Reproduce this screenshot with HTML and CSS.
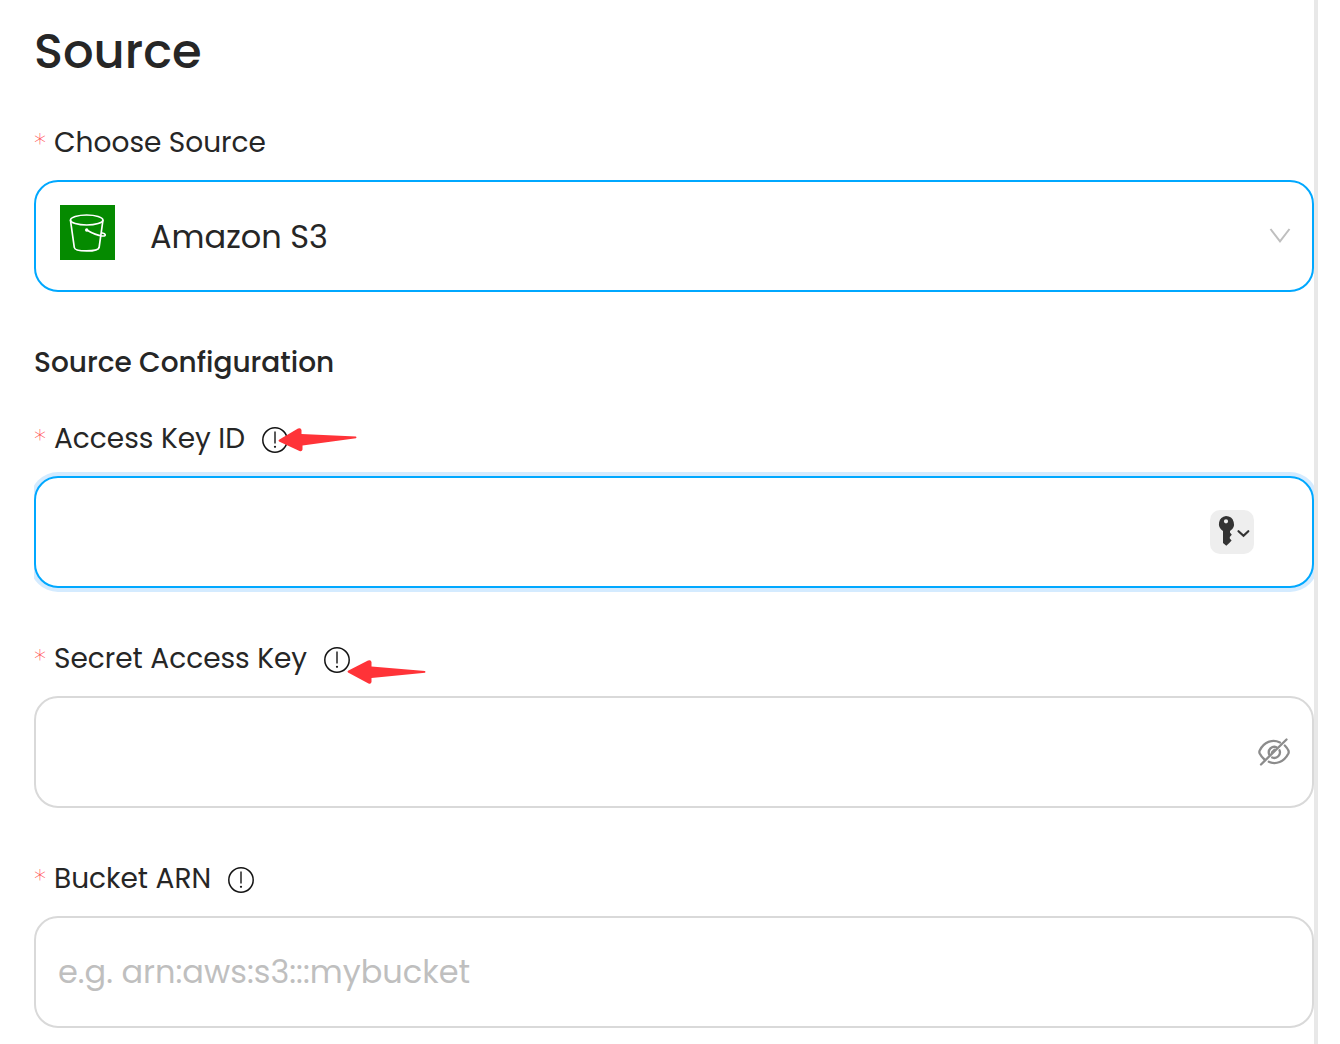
FILE: index.html
```html
<!DOCTYPE html>
<html lang="en">
<head>
<meta charset="utf-8">
<meta name="viewport" content="width=device-width, initial-scale=1">
<title>Source</title>
<link rel="stylesheet" href="styles.css">
</head>
<body>
<svg class="sprite" aria-hidden="true">
  <symbol id="info" viewBox="0 0 28 28">
    <circle cx="14" cy="14" r="12.2" fill="none" stroke="currentColor" stroke-width="1.5"/>
    <path d="M14 5.500v12" stroke="currentColor" stroke-width="1.4"/>
    <circle cx="14" cy="20.800" r="1.100" fill="currentColor"/>
  </symbol>
  <symbol id="arrow" viewBox="0 0 80 28">
    <path d="M1 14.500Q0 13.500 1 12.800L21 2.500Q24 1.300 24.500 4V8.500L78 13Q79 14 78 14.800L24.500 20V24Q24 26.500 21.500 25.500Z" fill="#ff3338"/>
  </symbol>
  <symbol id="arrow-tilted" viewBox="0 0 80 28">
    <path d="M1 15.500Q0 14.500 1 13.800L20 2.500Q23 1.300 23.500 4V8L78 10.500Q79 11.500 78 12.300L24.500 19.500V23.500Q24 26 21.500 25Z" fill="#ff3338"/>
  </symbol>
</svg>
<main class="panel">
  <h1 class="title">Source</h1>
  <form class="form">
    <div class="field">
      <div class="label-row"><span class="required">*</span><label for="source">Choose Source</label></div>
      <div class="control">
        <svg class="source-logo" viewBox="0 0 55 55" aria-hidden="true">
          <path fill="#058a00" d="M0 0h55v55H0z"/>
          <g fill="none" stroke="#fff" stroke-width="1.700" stroke-linecap="round">
            <ellipse cx="26.700" cy="15" rx="16.200" ry="5"/>
            <path d="M10.500 15.500L14.300 42.500c.5 4.600 24 4.600 24.800 0l3.800-27M26.700 25c5 3 12 5.600 16 6 4 .300 3-2.500-.5-3"/>
          </g>
          <circle cx="26.700" cy="25" r="1.700" fill="#fff"/>
        </svg>
        <select class="box box-select box-active" id="source"><option>Amazon S3</option></select>
        <svg class="chevron" viewBox="0 0 22 16" aria-hidden="true"><path d="M1.500 1L11 13.300 20.500 1" fill="none" stroke="#bfbfbf" stroke-width="2"/></svg>
      </div>
    </div>
    <h2 class="section-title">Source Configuration</h2>
    <div class="field">
      <div class="label-row"><span class="required">*</span><label for="key-id">Access Key ID</label>
        <span class="hint"><svg class="info"><use href="#info"/></svg><svg class="arrow arrow-near"><use href="#arrow-tilted"/></svg></span>
      </div>
      <div class="control">
        <input class="box box-active box-focus" id="key-id" type="text">
        <button class="key-button" type="button" aria-label="Saved keys">
          <svg viewBox="0 0 44 44" aria-hidden="true">
            <path fill="#333" fill-rule="evenodd" d="M16 6a8 8 0 0 1 4 14.900v1.600l1.800 2.300-2 2.200v1.500l1.800 2-2.300 2.500-3 2.800-3.300-2.900v-12A8 8 0 0 1 16 6zm0 3.200a2 2 0 1 0 0 4.200 2 2 0 1 0 0-4.200z"/>
            <path d="M28.500 21.200l5 4.600 4.800-4.600" fill="none" stroke="#333" stroke-width="2.200" stroke-linecap="round"/>
          </svg>
        </button>
      </div>
    </div>
    <div class="field">
      <div class="label-row"><span class="required">*</span><label for="secret">Secret Access Key</label>
        <span class="hint"><svg class="info"><use href="#info"/></svg><svg class="arrow arrow-low"><use href="#arrow"/></svg></span>
      </div>
      <div class="control">
        <input class="box" id="secret" type="password">
        <button class="eye-button" type="button" aria-label="Show secret">
          <svg viewBox="0 0 32 28" aria-hidden="true">
            <g fill="none" stroke="#8c8c8c" stroke-width="2.300" stroke-linecap="round">
              <path d="M22 4.500C14 .8 6 4 1.700 12.500Q1 14 1.700 15.500 3.500 19 6.500 21.500M26.800 7.500q2.400 2.400 3.600 5 .6 1.500 0 3C26 24 18 27 10.800 23.800"/>
              <path d="M18.500 9.200a5.600 5.600 0 0 0-7.300 7.300M21.500 12.200a5.600 5.600 0 0 1-7.300 7.300M16.500 11.800L14 14.300"/>
              <path d="M3 26.500L28.500 1.500"/>
            </g>
          </svg>
        </button>
      </div>
    </div>
    <div class="field">
      <div class="label-row"><span class="required">*</span><label for="arn">Bucket ARN</label>
        <span class="hint"><svg class="info"><use href="#info"/></svg></span>
      </div>
      <div class="control"><input class="box" id="arn" type="text" placeholder="e.g. arn:aws:s3:::mybucket"></div>
    </div>
  </form>
</main>
</body>
</html>
```
FILE: styles.css
```css
* { box-sizing: border-box; }
body {
  margin: 0;
  background: #fff;
  color: #262626;
  font-family: Poppins, Inter, sans-serif;
}
.sprite { display: none; }
.panel {
  min-height: 100vh;
  margin-right: 22px;
  padding: 21px 0 16px 34px;
  border-right: 4px solid #e8e8e8;
}
.title { margin: 0 0 40px; font-size: 48px; line-height: 62px; font-weight: 500; }
.form { display: flex; flex-direction: column; gap: 51px; }
.field { display: flex; flex-direction: column; gap: 17px; }
.section-title { margin: 0 0 -15px; font-size: 28px; line-height: 40px; font-weight: 500; }
.label-row { display: flex; align-items: center; font-size: 28px; line-height: 40px; }
.required { width: 20px; color: #ff4d4f; font-family: "DejaVu Sans", sans-serif; font-size: 24px; font-weight: 200; }
.hint { position: relative; display: flex; margin-left: 16px; padding-top: 2px; }
.info { width: 28px; height: 28px; color: #141414; }
.arrow { position: absolute; width: 80px; height: 28px; }
.arrow-near { left: 17px; top: 2px; }
.arrow-low { left: 24px; top: 14px; }
.control { position: relative; display: flex; }
.box {
  width: 100%;
  height: 112px;
  padding: 0 22px;
  border: 2px solid #d9d9d9;
  border-radius: 24px;
  outline: 0;
  background: #fff;
  color: #262626;
  font: 32px Poppins, Inter, sans-serif;
}
.box::placeholder { color: #bfbfbf; opacity: 1; }
.box-active { border-color: #00a8ff; }
.box-focus { box-shadow: 0 0 0 4px #d4ebff; clip-path: inset(-4px 0); }
.box-select { appearance: none; padding-left: 114px; }
.source-logo { position: absolute; left: 26px; top: 25px; width: 55px; height: 55px; }
.chevron { position: absolute; right: 23px; top: 48px; width: 22px; height: 16px; pointer-events: none; }
.key-button, .eye-button { position: absolute; padding: 0; border: 0; background: none; }
.key-button { right: 60px; top: 34px; width: 44px; height: 44px; border-radius: 10px; background: #eee; }
.eye-button { right: 24px; top: 42px; width: 32px; height: 28px; }
.key-button svg, .eye-button svg { display: block; width: 100%; height: 100%; }
```
